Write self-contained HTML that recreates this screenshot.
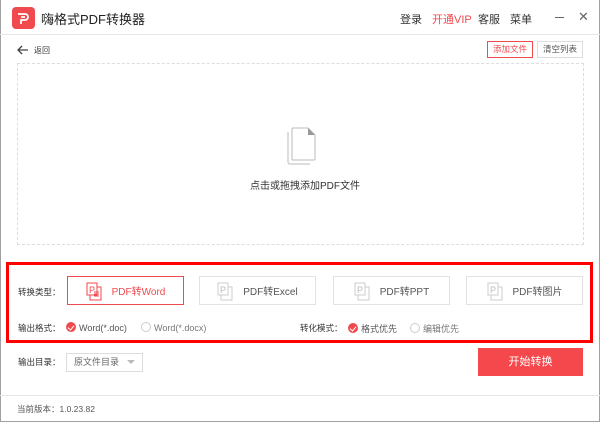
<!DOCTYPE html>
<html><head><meta charset="utf-8"><style>
*{margin:0;padding:0;box-sizing:border-box}
body{width:600px;height:422px;overflow:hidden;background:#fff;font-family:"Liberation Sans","Noto Sans CJK SC",sans-serif;position:relative;color:#333}
.a{position:absolute}
.win{position:absolute;left:0;top:0;width:600px;height:422px;border:1px solid #a0a0a0;border-top:none}
.t{font-size:10px;color:#333;white-space:nowrap}
.btn{position:absolute;top:276px;height:29px;border:1px solid #e3e3e3;background:#fff;font-size:10px;color:#555;display:flex;align-items:center;justify-content:center}
.btn svg{margin-right:8px}
.radio{display:inline-block;width:10px;height:10px;border-radius:50%;border:1px solid #ccc;vertical-align:-1px;margin-right:3px}
.on{background:#f04a4e;border-color:#f04a4e;position:relative}
.on:after{content:"";position:absolute;left:2px;top:1px;width:3px;height:5px;border:solid #fff;border-width:0 1.5px 1.5px 0;transform:rotate(40deg)}
</style></head><body>
<div class="win"></div>
<!-- header -->
<div class="a" style="left:12px;top:7px;width:23px;height:22px;background:#f04a4e;border-radius:4px"></div>
<svg class="a" style="left:15px;top:10px" width="17" height="16" viewBox="0 0 17 16"><path d="M3 4h7a3 3 0 0 1 0 6H6v4M6 7h4" fill="none" stroke="#fff" stroke-width="1.8"/></svg>
<div class="a" style="left:41px;top:9px;font-size:13px;color:#222">嗨格式PDF转换器</div>
<div class="a t" style="left:400px;top:11px;font-size:11px">登录</div>
<div class="a t" style="left:432px;top:11px;font-size:11px;color:#f04a4e">开通VIP</div>
<div class="a t" style="left:478px;top:11px;font-size:11px">客服</div>
<div class="a t" style="left:510px;top:11px;font-size:11px">菜单</div>
<div class="a" style="left:555px;top:17px;width:9px;height:1px;background:#666"></div>
<div class="a t" style="left:578px;top:9px;font-size:13px;color:#666">✕</div>
<div class="a" style="left:0;top:34px;width:600px;height:1px;background:#e6e6e6"></div>
<!-- back -->
<svg class="a" style="left:17px;top:45px" width="12" height="10" viewBox="0 0 12 10"><path d="M11 5H1.5M5 1L1 5l4 4" fill="none" stroke="#444" stroke-width="1.3"/></svg>
<div class="a t" style="left:34px;top:45px;font-size:8px">返回</div>
<div class="a" style="left:487px;top:41px;width:46px;height:17px;border:1px solid #f04a4e;color:#f04a4e;font-size:8.5px;text-align:center;line-height:15px">添加文件</div>
<div class="a" style="left:537px;top:41px;width:46px;height:17px;border:1px solid #ddd;color:#555;font-size:8.5px;text-align:center;line-height:15px">清空列表</div>
<!-- drop zone -->
<div class="a" style="left:17px;top:63px;width:567px;height:182px;border:1px dashed #ddd"></div>
<svg class="a" style="left:284px;top:126px" width="36" height="40" viewBox="0 0 36 40"><path d="M4 6v30a2 2 0 0 0 2 2h20" fill="none" stroke="#bbb" stroke-width="1"/><path d="M9 2h15l7 7v24a1 1 0 0 1-1 1H9a1 1 0 0 1-1-1V3a1 1 0 0 1 1-1z" fill="#fff" stroke="#bbb"/><path d="M24 2v7h7z" fill="#999"/></svg>
<div class="a t" style="left:250px;top:177px">点击或拖拽添加PDF文件</div>
<!-- red box -->
<div class="a" style="left:6px;top:262px;width:587px;height:81px;border:3px solid #f00"></div>
<div class="a t" style="left:18px;top:286px;font-size:8.5px">转换类型：</div>
<div class="btn" style="left:67px;width:117px;border-color:#f04a4e;color:#f04a4e"><svg width="18" height="20" viewBox="0 0 18 20"><rect x="4" y="6" width="11" height="13" fill="#fff" stroke="#f04a4e"/><rect x="1" y="2" width="10" height="12" fill="#fff" stroke="#f04a4e"/><text x="3" y="12" font-size="9" fill="#f04a4e" font-family="Liberation Sans">P</text><path d="M8 11h5M8 13h5M8 15h5" stroke="#f04a4e"/></svg>PDF转Word</div>
<div class="btn" style="left:199px;width:117px"><svg width="18" height="20" viewBox="0 0 18 20"><rect x="4" y="6" width="11" height="13" fill="#fff" stroke="#ccc"/><rect x="1" y="2" width="10" height="12" fill="#fff" stroke="#ccc"/><text x="3" y="12" font-size="9" fill="#bbb" font-family="Liberation Sans">P</text></svg>PDF转Excel</div>
<div class="btn" style="left:333px;width:117px"><svg width="18" height="20" viewBox="0 0 18 20"><rect x="4" y="6" width="11" height="13" fill="#fff" stroke="#ccc"/><rect x="1" y="2" width="10" height="12" fill="#fff" stroke="#ccc"/><text x="3" y="12" font-size="9" fill="#bbb" font-family="Liberation Sans">P</text></svg>PDF转PPT</div>
<div class="btn" style="left:466px;width:117px"><svg width="18" height="20" viewBox="0 0 18 20"><rect x="4" y="6" width="11" height="13" fill="#fff" stroke="#ccc"/><rect x="1" y="2" width="10" height="12" fill="#fff" stroke="#ccc"/><text x="3" y="12" font-size="9" fill="#bbb" font-family="Liberation Sans">P</text></svg>PDF转图片</div>
<div class="a t" style="left:18px;top:322px;font-size:8.5px">输出格式：</div>
<div class="a t" style="left:66px;top:322px;font-size:9px;color:#555"><span class="radio on"></span>Word(*.doc)</div>
<div class="a t" style="left:141px;top:322px;font-size:9px;color:#777"><span class="radio"></span>Word(*.docx)</div>
<div class="a t" style="left:300px;top:322px;font-size:8.5px">转化模式：</div>
<div class="a t" style="left:348px;top:322px;font-size:9px;color:#555"><span class="radio on"></span>格式优先</div>
<div class="a t" style="left:410px;top:322px;font-size:9px;color:#777"><span class="radio"></span>编辑优先</div>
<!-- output dir -->
<div class="a t" style="left:18px;top:356px;font-size:8.5px">输出目录：</div>
<div class="a" style="left:66px;top:353px;width:77px;height:19px;border:1px solid #ddd;font-size:9px;color:#666;padding-left:7px;line-height:17px">原文件目录</div>
<div class="a" style="left:127px;top:360px;border:4px solid transparent;border-top:4px solid #bbb;border-bottom:none"></div>
<div class="a" style="left:478px;top:348px;width:105px;height:28px;background:#f5484d;color:#fff;font-size:11px;text-align:center;line-height:28px">开始转换</div>
<!-- footer -->
<div class="a" style="left:0;top:395px;width:600px;height:1px;background:#e6e6e6"></div>
<div class="a t" style="left:17px;top:403px;font-size:8.5px;color:#555">当前版本：1.0.23.82</div>
</body></html>
